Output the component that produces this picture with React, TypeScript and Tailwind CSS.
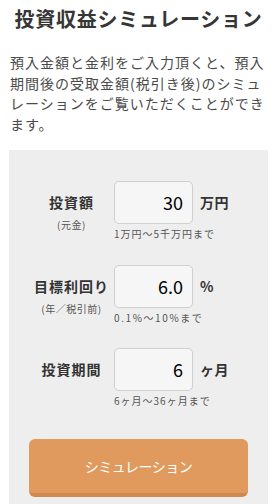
import React from "react";

const font = { fontFamily: '"Noto Sans CJK JP", "Noto Sans", sans-serif' };

function Row({
  label,
  sub,
  value,
  unit,
  hint,
  hintClass,
}: {
  label: string;
  sub?: string;
  value: string;
  unit: string;
  hint: string;
  hintClass: string;
}) {
  return (
    <div className="flex">
      <div className="w-[85px] flex flex-col items-center">
        <div className="h-[43px] flex items-center text-[14px] font-bold tracking-[1px] text-[#333]">
          {label}
        </div>
        {sub && (
          <div className="-mt-[6px] leading-[14px] text-[10px] tracking-[0.5px] text-[#555]">
            {sub}
          </div>
        )}
      </div>
      <div className="flex flex-col">
        <div className="flex items-center">
          <div className="w-[79px] h-[43px] rounded-[5px] border border-[#cfcfcf] bg-[#f6f6f6] flex items-center justify-end pr-[9px] text-[18px] text-black">
            {value}
          </div>
          <div className="ml-[7px] text-[14px] font-bold tracking-[0.5px] text-[#333]">
            {unit}
          </div>
        </div>
        <div className={"mt-[3px] leading-[14px] text-[10px] text-[#555] " + hintClass}>
          {hint}
        </div>
      </div>
    </div>
  );
}

export default function App() {
  return (
    <div className="w-[279px] bg-white pl-[9px] pr-[11px]" style={font}>
      <h1 className="pt-[5px] text-center text-[20px] leading-[28px] font-bold tracking-[0.75px] text-[#363636]">
        投資収益シミュレーション
      </h1>
      <p className="mt-[19px] pl-[1px] text-[14px] leading-[20.5px] tracking-[1px] text-[#4a4a4a]">
        預入金額と金利をご入力頂くと、預入期間後の受取金額(税引き後)のシミュレーションをご覧いただくことができます。
      </p>
      <div className="mt-[16px] bg-[#eeeeee] px-[20px] pt-[31px] pb-[10px]">
        <div className="flex flex-col gap-[23.5px]">
          <Row
            label="投資額"
            sub="(元金)"
            value="30"
            unit="万円"
            hint="1万円～5千万円まで"
            hintClass="tracking-[1px]"
          />
          <Row
            label="目標利回り"
            sub="(年／税引前)"
            value="6.0"
            unit="%"
            hint="0.1%～10%まで"
            hintClass="tracking-[1.6px]"
          />
          <Row
            label="投資期間"
            value="6"
            unit="ヶ月"
            hint="6ヶ月～36ヶ月まで"
            hintClass="tracking-[1px]"
          />
        </div>
        <button className="mt-[31px] w-full h-[58px] rounded-[6px] bg-[#e09a5d] border-b-[4px] border-[#d08850] text-white text-[14px] tracking-[-0.5px] font-normal">
          シミュレーション
        </button>
      </div>
    </div>
  );
}
